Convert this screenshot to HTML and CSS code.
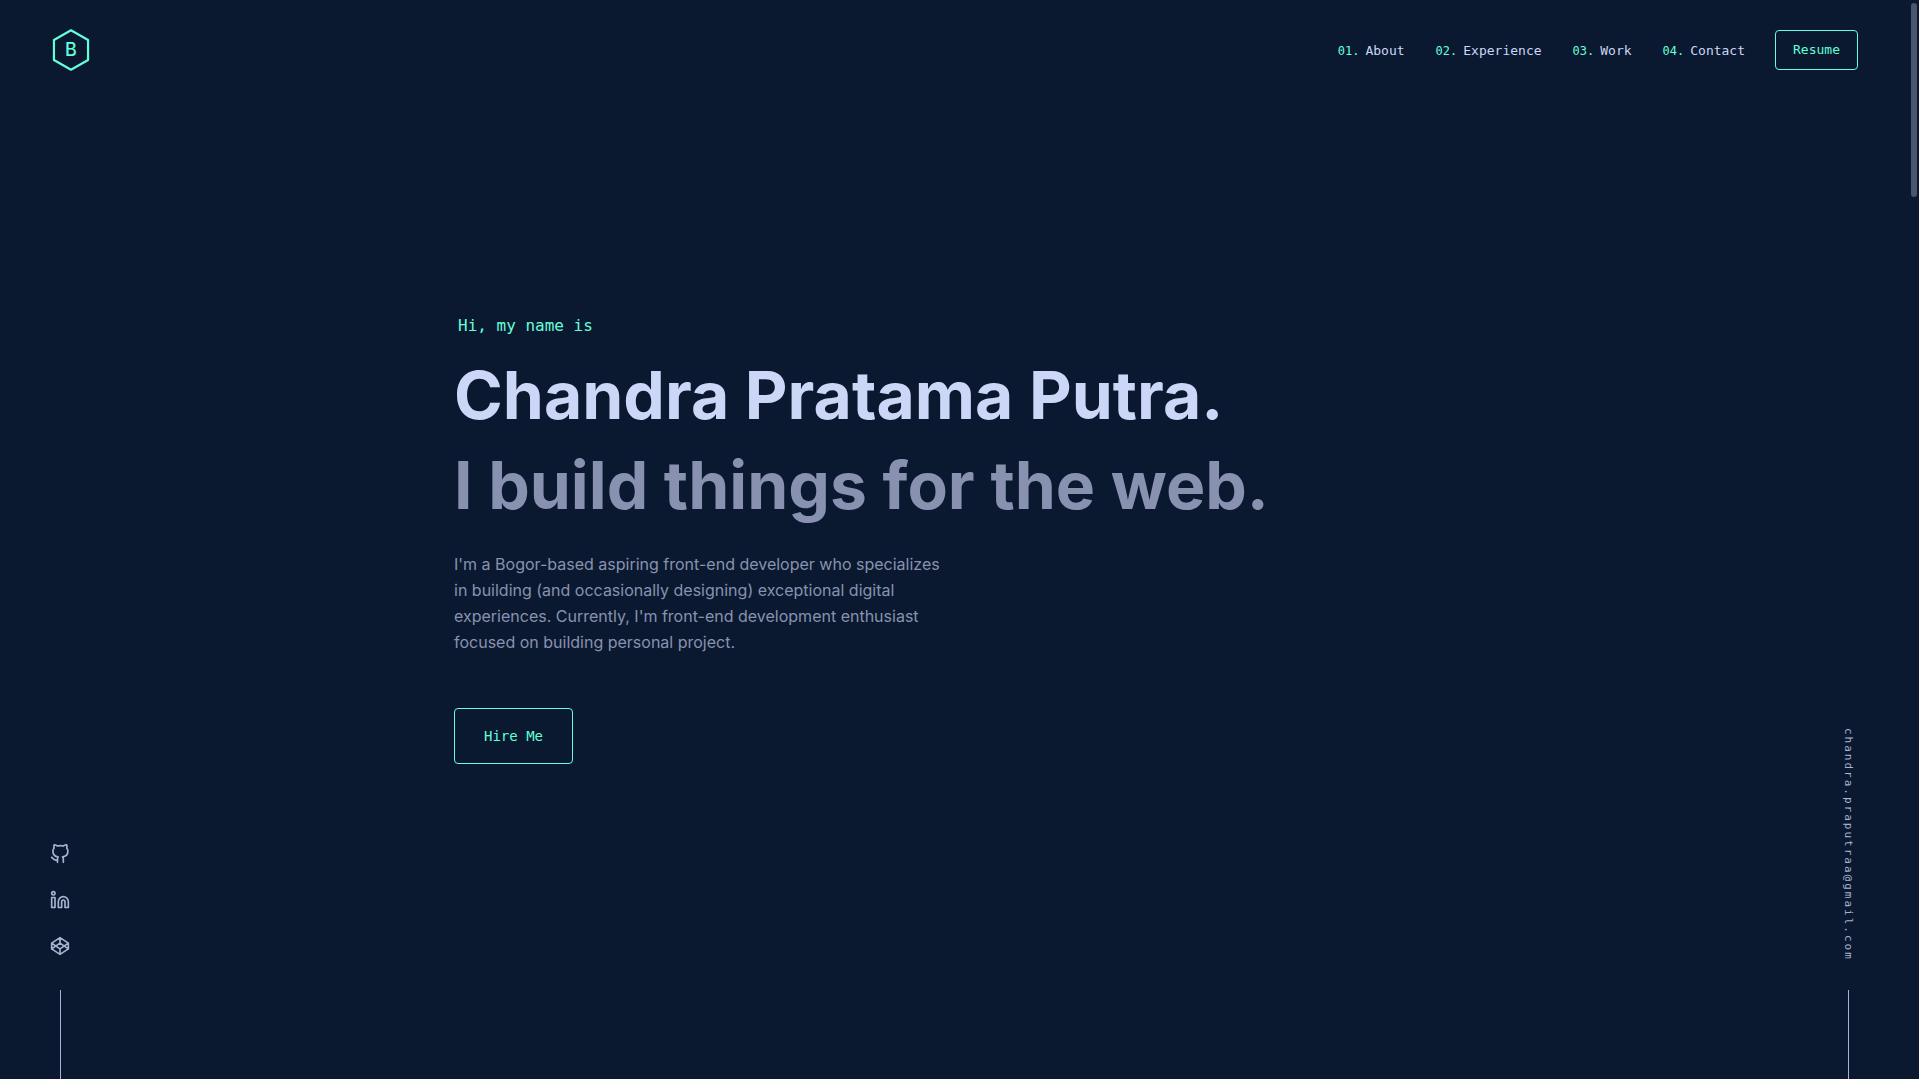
FILE: index.html
```html
<!DOCTYPE html>
<html lang="en">
<head>
<meta charset="utf-8">
<meta name="viewport" content="width=device-width, initial-scale=1">
<title>Chandra Pratama Putra</title>
<link rel="stylesheet" href="styles.css">
</head>
<body>
<div class="page">
  <header class="header">
    <a class="logo" href="#top" aria-label="Home">
      <svg viewBox="0 0 84 96" width="42" height="42" fill="none" stroke="currentColor" stroke-width="5" stroke-linejoin="round" aria-hidden="true">
        <path d="M42 3 L3 25 V71 L42 93 L81 71 V25 Z"/>
      </svg>
      <span class="logo-letter">B</span>
    </a>
    <nav class="nav">
      <ol class="nav-list">
        <li><a href="#about"><span class="num">01.</span>About</a></li>
        <li><a href="#experience"><span class="num">02.</span>Experience</a></li>
        <li><a href="#work"><span class="num">03.</span>Work</a></li>
        <li><a href="#contact"><span class="num">04.</span>Contact</a></li>
      </ol>
      <a class="button button-small" href="#resume">Resume</a>
    </nav>
  </header>

  <aside class="rail rail-left">
    <a href="#github" aria-label="GitHub">
      <svg class="icon" viewBox="0 0 24 24" aria-hidden="true"><path d="M9 19c-5 1.5-5-2.5-7-3m14 6v-3.87a3.37 3.37 0 0 0-.94-2.61c3.14-.35 6.44-1.54 6.44-7A5.44 5.44 0 0 0 20 4.77 5.07 5.07 0 0 0 19.91 1S18.73.65 16 2.48a13.38 13.38 0 0 0-7 0C6.27.65 5.09 1 5.09 1A5.07 5.07 0 0 0 5 4.77a5.44 5.44 0 0 0-1.5 3.78c0 5.42 3.3 6.61 6.44 7A3.37 3.37 0 0 0 9 18.13V22"/></svg>
    </a>
    <a href="#linkedin" aria-label="LinkedIn">
      <svg class="icon" viewBox="0 0 24 24" aria-hidden="true"><path d="M16 8a6 6 0 0 1 6 6v7h-4v-7a2 2 0 0 0-4 0v7h-4v-7a6 6 0 0 1 6-6z"/><rect x="2" y="9" width="4" height="12"/><circle cx="4" cy="4" r="2"/></svg>
    </a>
    <a href="#codepen" aria-label="CodePen">
      <svg class="icon" viewBox="0 0 24 24" aria-hidden="true"><path d="M12 2 22 8.5v7L12 22 2 15.500v-7zM12 22v-6.500M22 8.500l-10 7-10-7M2 15.500l10-7 10 7M12 2v6.500"/></svg>
    </a>
  </aside>

  <main class="hero">
    <h1 class="hello">Hi, my name is</h1>
    <h2 class="title">Chandra Pratama Putra.</h2>
    <h3 class="title title-muted">I build things for the web.</h3>
    <p class="intro">I'm a Bogor-based aspiring front-end developer who specializes in building (and occasionally designing) exceptional digital experiences. Currently, I'm front-end development enthusiast focused on building personal project.</p>
    <a class="button button-large" href="#contact">Hire Me</a>
  </main>

  <aside class="rail rail-right">
    <a class="email" href="mailto:chandra.praputraa@gmail.com">chandra.praputraa@gmail.com</a>
  </aside>
</div>
<div class="scrollbar" aria-hidden="true"></div>
</body>
</html>
```
FILE: styles.css
```css
:root {
  --navy: #0a192f;
  --green: #64ffda;
  --white: #ccd6f6;
  --light: #a8b2d1;
  --slate: #8892b0;
  --thumb: #495670;
  --sans: "Inter", sans-serif;
  --mono: "DejaVu Sans Mono", monospace;
}

* {
  box-sizing: border-box;
}

body {
  margin: 0;
  background: var(--navy);
  color: var(--slate);
  font-family: var(--sans);
}

a {
  color: inherit;
  text-decoration: none;
}

.page {
  display: grid;
  grid-template-columns: 40px 1fr 40px;
  grid-template-rows: 100px 1fr;
  min-height: 100vh;
  padding: 0 40px;
  margin-right: 11px;
}

.header {
  grid-column: 1 / -1;
  grid-row: 1;
  display: flex;
  align-items: center;
  justify-content: space-between;
  padding: 0 10px;
}

.logo {
  display: grid;
  place-items: center;
  color: var(--green);
}

.logo > * {
  grid-area: 1 / 1;
}

.logo-letter {
  font-size: 18px;
  font-weight: 500;
  line-height: 20px;
}

.nav,
.nav-list {
  display: flex;
  align-items: center;
  gap: 30px;
}

.nav {
  color: var(--white);
  font-family: var(--mono);
  font-size: 13px;
}

.nav-list {
  gap: 31px;
  margin: 0;
  padding: 0;
  list-style: none;
}

.num {
  margin-right: 6px;
  color: var(--green);
  font-size: 12px;
}

.button {
  border: 1px solid var(--green);
  border-radius: 4px;
  color: var(--green);
  font-family: var(--mono);
}

.button-small {
  padding: 10px 17px;
  font-size: 13px;
  line-height: 18px;
}

.button-large {
  padding: 18px 29px;
  font-size: 14px;
  line-height: 18px;
}

.hero {
  grid-column: 2;
  grid-row: 1 / 3;
  display: flex;
  flex-direction: column;
  align-items: flex-start;
  justify-content: center;
  width: 100%;
  max-width: 1000px;
  margin: 0 auto;
  padding-bottom: 2px;
}

.hello {
  margin: 0 0 12px;
  padding-left: 4px;
  color: var(--green);
  font: 400 16px/24px var(--mono);
}

.title {
  margin: 0;
  color: var(--white);
  font-size: 66px;
  font-weight: 700;
  line-height: 90px;
}

.title-muted {
  color: var(--slate);
}

.intro {
  max-width: 500px;
  margin: 21px 0 53px;
  font-size: 16px;
  line-height: 26px;
}

.rail {
  grid-row: 2;
  align-self: end;
  display: flex;
  flex-direction: column;
  align-items: center;
  color: var(--light);
}

.rail-left {
  grid-column: 1;
  gap: 26px;
}

.rail-right {
  grid-column: 3;
}

.rail::after {
  content: "";
  width: 1px;
  height: 89px;
  background: var(--light);
}

.rail-left::after {
  margin-top: 8px;
}

.icon {
  display: block;
  width: 20px;
  height: 20px;
  fill: none;
  stroke: currentColor;
  stroke-width: 2;
  stroke-linecap: round;
  stroke-linejoin: round;
}

.email {
  margin-bottom: 29px;
  font-family: var(--mono);
  font-size: 11px;
  line-height: 18px;
  letter-spacing: 2px;
  writing-mode: vertical-rl;
}

.scrollbar {
  position: fixed;
  top: 3px;
  right: 2px;
  width: 6px;
  height: 18vh;
  border-radius: 3px;
  background: var(--thumb);
}
```
